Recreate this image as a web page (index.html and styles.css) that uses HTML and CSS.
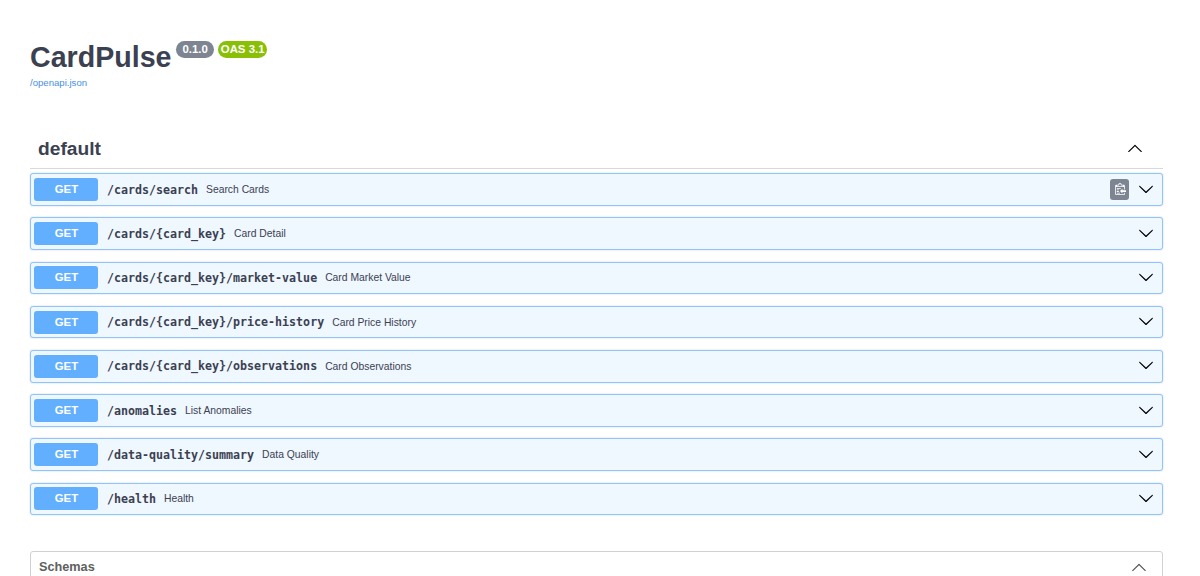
FILE: index.html
```html
<!DOCTYPE html>
<html lang="en">
<head>
  <meta charset="UTF-8">
  <meta name="viewport" content="width=device-width, initial-scale=1.0">
  <title>CardPulse - Swagger UI</title>
  <link rel="stylesheet" href="styles.css">
</head>
<body>
  <svg class="defs" width="0" height="0">
    <symbol id="arrow-down" viewBox="0 0 20 20">
      <path d="M17.418 6.109c.272-.268.709-.268.979 0s.271.701 0 .969l-7.908 7.83c-.27.268-.707.268-.979 0l-7.908-7.83c-.27-.268-.27-.701 0-.969s.709-.268.979 0L10 13.25z"/>
    </symbol>
    <symbol id="arrow-up" viewBox="0 0 20 20">
      <path d="M17.418 14.908c.272.268.709.268.979 0s.271-.701 0-.969l-7.908-7.83c-.27-.268-.707-.268-.979 0l-7.908 7.83c-.27.268-.27.701 0 .969s.709.268.979 0L10 7.767z"/>
    </symbol>
  </svg>
  <div class="wrapper">
    <header class="info">
      <h1 class="title">CardPulse</h1>
      <span class="badge">0.1.0</span>
      <span class="badge oas">OAS 3.1</span>
    </header>
    <a class="link" href="#">/openapi.json</a>

    <div class="tag">
      <h2>default</h2>
      <svg class="arrow"><use href="#arrow-up"/></svg>
    </div>

    <div class="operations">
      <div class="opblock">
        <span class="method">GET</span>
        <span class="path">/cards/search</span>
        <span class="description">Search Cards</span>
        <button class="copy" aria-label="Copy to clipboard">
          <svg viewBox="0 0 15 16">
            <path transform="translate(-.5 0)" d="M4 12h4v1H4v-1zm5-6H4v1h5V6zm2 3V7l-3 3 3 3v-2h5V9h-5zM6.5 8H4v1h2.5V8zM4 11h2.5v-1H4v1zm9 1h1v2c-.02.28-.11.52-.3.7-.19.18-.42.28-.7.3H3c-.55 0-1-.45-1-1V3c0-.55.45-1 1-1h3c0-1.11.89-2 2-2 1.11 0 2 .89 2 2h3c.55 0 1 .45 1 1v5h-1V5H3v9h10v-2zM4 4h8c0-.55-.45-1-1-1h-1c-.55 0-1-.45-1-1s-.45-1-1-1-1 .45-1 1-.45 1-1 1H5c-.55 0-1 .45-1 1z"/>
          </svg>
        </button>
        <svg class="arrow"><use href="#arrow-down"/></svg>
      </div>
      <div class="opblock">
        <span class="method">GET</span>
        <span class="path">/cards/{card_key}</span>
        <span class="description">Card Detail</span>
        <svg class="arrow"><use href="#arrow-down"/></svg>
      </div>
      <div class="opblock">
        <span class="method">GET</span>
        <span class="path">/cards/{card_key}/market-value</span>
        <span class="description">Card Market Value</span>
        <svg class="arrow"><use href="#arrow-down"/></svg>
      </div>
      <div class="opblock">
        <span class="method">GET</span>
        <span class="path">/cards/{card_key}/price-history</span>
        <span class="description">Card Price History</span>
        <svg class="arrow"><use href="#arrow-down"/></svg>
      </div>
      <div class="opblock">
        <span class="method">GET</span>
        <span class="path">/cards/{card_key}/observations</span>
        <span class="description">Card Observations</span>
        <svg class="arrow"><use href="#arrow-down"/></svg>
      </div>
      <div class="opblock">
        <span class="method">GET</span>
        <span class="path">/anomalies</span>
        <span class="description">List Anomalies</span>
        <svg class="arrow"><use href="#arrow-down"/></svg>
      </div>
      <div class="opblock">
        <span class="method">GET</span>
        <span class="path">/data-quality/summary</span>
        <span class="description">Data Quality</span>
        <svg class="arrow"><use href="#arrow-down"/></svg>
      </div>
      <div class="opblock">
        <span class="method">GET</span>
        <span class="path">/health</span>
        <span class="description">Health</span>
        <svg class="arrow"><use href="#arrow-down"/></svg>
      </div>
    </div>

    <section class="models">
      <h3>Schemas</h3>
      <svg class="arrow"><use href="#arrow-up"/></svg>
    </section>
  </div>
</body>
</html>
```
FILE: styles.css
```css
* {
  box-sizing: border-box;
}

body {
  margin: 0;
  height: 576px;
  overflow: hidden;
  background: #ffffff;
  color: #3b4151;
  font-family: "Liberation Sans", Arial, sans-serif;
}

.defs {
  display: block;
}

.wrapper {
  width: 1133px;
  margin-left: 30px;
  padding-top: 41px;
}

.info {
  display: flex;
  align-items: flex-start;
  height: 35px;
}

.title {
  margin: 0 5px 0 0;
  font-size: 28.6px;
  line-height: 33px;
}

.badge {
  height: 17px;
  margin-right: 4px;
  padding: 0 6px;
  border-radius: 9px;
  background: #7d8492;
  color: #ffffff;
  font-size: 11.4px;
  font-weight: bold;
  line-height: 17px;
}

.oas {
  padding: 0 3px;
  background: #89bf04;
}

.link {
  display: block;
  height: 13px;
  color: #4990e2;
  font-size: 9.6px;
  line-height: 13px;
  text-decoration: none;
}

.tag {
  display: flex;
  align-items: center;
  justify-content: space-between;
  height: 41px;
  margin: 39px 0 4.3px;
  padding: 0 20.5px 0 8px;
  border-bottom: 1px solid #d8d9dc;
}

.tag h2 {
  margin: 0;
  padding-top: 2px;
  font-size: 19.2px;
}

.arrow {
  width: 16px;
  height: 16px;
  flex: none;
}

.tag .arrow {
  margin-bottom: 1px;
}

.opblock {
  display: flex;
  align-items: center;
  height: 32.6px;
  margin-bottom: 11.6px;
  padding: 0 8.5px 0 3.4px;
  border: 1px solid #8fc5ff;
  border-radius: 3px;
  background: #eff7ff;
  box-shadow: 0 0 2px rgba(0, 0, 0, 0.19);
}

.method {
  width: 64px;
  height: 23px;
  border-radius: 3px;
  background: #61affe;
  color: #ffffff;
  font-size: 11.4px;
  font-weight: bold;
  line-height: 22px;
  text-align: center;
}

.path {
  margin: 0 8px 0 8.5px;
  font-family: "DejaVu Sans Mono", monospace;
  font-size: 11.65px;
  font-weight: bold;
}

.description {
  font-size: 10.35px;
}

.opblock .arrow {
  margin-bottom: 2px;
  margin-left: auto;
}

.copy {
  display: flex;
  align-items: center;
  justify-content: center;
  width: 19px;
  height: 21px;
  margin-left: auto;
  padding: 0;
  border: none;
  border-radius: 3px;
  background: #7d8492;
}

.copy svg {
  width: 12px;
  height: 13px;
  fill: #ffffff;
}

.opblock .copy + .arrow {
  margin-left: 8.5px;
}

.models {
  display: flex;
  align-items: center;
  justify-content: space-between;
  height: 40px;
  margin-top: 36px;
  padding: 0 15.5px 8px 8px;
  border: 1px solid #d0d1d4;
  border-radius: 3px;
  color: #606060;
}

.models h3 {
  margin: 0;
  font-size: 12.7px;
}

.models .arrow {
  fill: #505050;
}
```
